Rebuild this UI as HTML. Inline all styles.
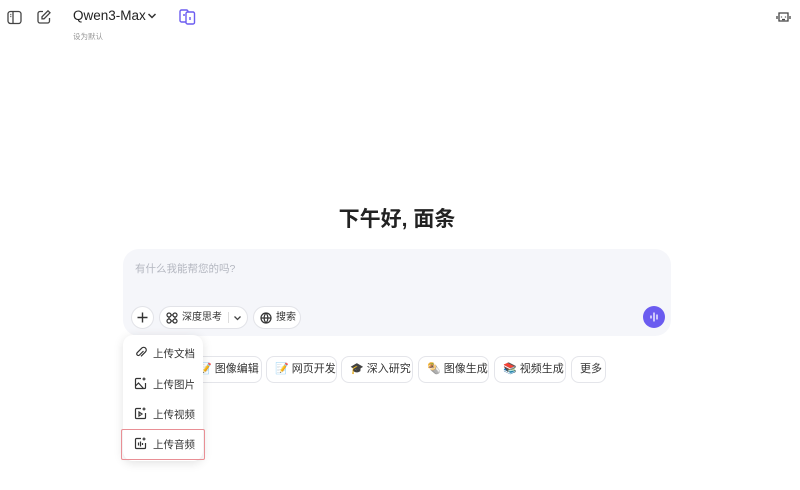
<!DOCTYPE html><html><head><meta charset="utf-8"><style>
*{box-sizing:border-box;margin:0;padding:0}
body{width:800px;height:490px;background:#fff;font-family:"Liberation Sans","Noto Sans CJK SC",sans-serif;position:relative;overflow:hidden;color:#222}
.a{position:absolute}
.chip{position:absolute;top:356px;height:27px;border:1px solid #e4e5ea;border-radius:8px;font-size:11px;line-height:25px;padding:0 8px;color:#333;background:#fff;white-space:nowrap}
.pill{position:absolute;top:306px;height:23px;border:1px solid #e2e3e8;border-radius:12px;background:#fff;font-size:10px;line-height:21px;color:#333}
.mi{position:absolute;left:134px;font-size:10.5px;color:#333}
.mi svg{position:absolute;left:0;top:0}
.mi span{position:absolute;left:19px;top:0;white-space:nowrap}
</style></head><body>
<svg class="a" style="left:7px;top:10px" width="15" height="15" viewBox="0 0 15 15" fill="none" stroke="#444" stroke-width="1.3"><rect x="1" y="1.5" width="13" height="12" rx="2.5"/><path d="M6 1.5v12M3.3 4.5h1M3.3 6.5h1"/></svg>
<svg class="a" style="left:36px;top:9px" width="16" height="16" viewBox="0 0 16 16" fill="none" stroke="#444" stroke-width="1.3"><path d="M7 2.5H4a2 2 0 0 0-2 2v7.5a2 2 0 0 0 2 2h7.5a2 2 0 0 0 2-2V9"/><path d="M12 1.8l2 2-6 6H6V7.8z"/></svg>
<div class="a" style="left:73px;top:8px;font-size:13.5px;color:#222">Qwen3-Max</div>
<svg class="a" style="left:147px;top:12px" width="10" height="8" viewBox="0 0 10 8" fill="none" stroke="#333" stroke-width="1.5"><path d="M1.5 2l3.5 3.5L8.5 2"/></svg>
<div class="a" style="left:73px;top:31px;font-size:7.5px;color:#999">设为默认</div>
<svg class="a" style="left:179px;top:9px" width="17" height="16" viewBox="0 0 17 16" fill="none" stroke="#6b5cf0" stroke-width="1.4"><rect x="1" y="1" width="8" height="12" rx="1.5"/><rect x="7" y="3" width="8.5" height="12" rx="1.5" fill="#fff"/><path d="M4 6h2M11 8v3"/></svg>
<svg class="a" style="left:776px;top:10px" width="15" height="14" viewBox="0 0 15 14" fill="none" stroke="#444" stroke-width="1.3"><path d="M3 3h9v8H3zM1 6v3M14 6v3M5.5 6.5v1M9.5 6.5v1M6 9.5h3"/></svg>
<div class="a" style="left:0;width:794px;top:203px;text-align:center;font-size:21px;font-weight:bold;color:#222">下午好, 面条</div>
<div class="a" style="left:123px;top:249px;width:548px;height:87px;background:#f5f6fa;border-radius:16px"></div>
<div class="a" style="left:135px;top:261px;font-size:10.5px;color:#b4b7c0">有什么我能帮您的吗?</div>
<div class="pill" style="left:131px;width:23px"><svg style="position:absolute;left:5px;top:5px" width="11" height="11" viewBox="0 0 11 11" stroke="#333" stroke-width="1.4"><path d="M5.5 0.5v10M0.5 5.5h10"/></svg></div>
<div class="pill" style="left:159px;width:89px"><svg style="position:absolute;left:6px;top:5px" width="12" height="12" viewBox="0 0 12 12" fill="none" stroke="#333" stroke-width="1.2"><circle cx="3" cy="3" r="2"/><circle cx="9" cy="3" r="2"/><circle cx="3" cy="9" r="2"/><circle cx="9" cy="9" r="2"/><path d="M5 3h2M5 9h2M3 5v2M9 5v2"/></svg><span style="position:absolute;left:22px">深度思考</span><span style="position:absolute;left:68px;top:5px;width:1px;height:11px;background:#ddd"></span><svg style="position:absolute;left:73px;top:8px" width="9" height="6" viewBox="0 0 9 6" fill="none" stroke="#444" stroke-width="1.3"><path d="M1.5 1.5l3 3 3-3"/></svg></div>
<div class="pill" style="left:253px;width:48px"><svg style="position:absolute;left:6px;top:5px" width="12" height="12" viewBox="0 0 12 12" fill="none" stroke="#333" stroke-width="1.2"><circle cx="6" cy="6" r="5"/><path d="M1 6h10M6 1c-2.5 3-2.5 7 0 10M6 1c2.5 3 2.5 7 0 10"/></svg><span style="position:absolute;left:22px">搜索</span></div>
<div class="a" style="left:643px;top:306px;width:22px;height:22px;border-radius:50%;background:#6b5cf0"><svg style="position:absolute;left:5px;top:5px" width="12" height="12" viewBox="0 0 12 12" stroke="#fff" stroke-width="1.3" stroke-linecap="round"><path d="M3 5v2M6 2v8M9 4v4"/></svg></div>
<div class="chip" style="left:185px;width:77px;padding-left:12px">📝 图像编辑</div>
<div class="chip" style="left:266px;width:71px">📝 网页开发</div>
<div class="chip" style="left:341px;width:72px">🎓 深入研究</div>
<div class="chip" style="left:418px;width:71px">🌯 图像生成</div>
<div class="chip" style="left:494px;width:72px">📚 视频生成</div>
<div class="chip" style="left:571px;width:35px">更多</div>
<div class="a" style="left:123px;top:335px;width:80px;height:126px;background:#fff;border-radius:10px;box-shadow:0 2px 10px rgba(0,0,0,.12)"></div>
<div class="a" style="left:121px;top:429px;width:84px;height:31px;border:1.5px solid #e98f95;border-radius:2px"></div>
<div class="mi" style="top:346px"><svg width="13" height="13" viewBox="0 0 13 13" fill="none" stroke="#333" stroke-width="1.2"><path d="M9.5 5l-4 4a1.6 1.6 0 0 1-2.3-2.3l4.6-4.6a2.6 2.6 0 0 1 3.7 3.7L7 10.3"/></svg><span>上传文档</span></div>
<div class="mi" style="top:377px"><svg width="13" height="13" viewBox="0 0 13 13" fill="none" stroke="#333" stroke-width="1.2"><path d="M7 1.5H2.5a1 1 0 0 0-1 1v8a1 1 0 0 0 1 1h8a1 1 0 0 0 1-1V6M1.5 9l3-3 5 5.5M10 0.5v3M8.5 2h3"/></svg><span>上传图片</span></div>
<div class="mi" style="top:407px"><svg width="13" height="13" viewBox="0 0 13 13" fill="none" stroke="#333" stroke-width="1.2"><path d="M7 1.5H2.5a1 1 0 0 0-1 1v8a1 1 0 0 0 1 1h8a1 1 0 0 0 1-1V6M5 5v4l3-2zM10 0.5v3M8.5 2h3"/></svg><span>上传视频</span></div>
<div class="mi" style="top:437px"><svg width="13" height="13" viewBox="0 0 13 13" fill="none" stroke="#333" stroke-width="1.2"><path d="M7 1.5H2.5a1 1 0 0 0-1 1v8a1 1 0 0 0 1 1h8a1 1 0 0 0 1-1V6M4.5 5.5v3M6.5 4.5v5M8.5 6v2M10 0.5v3M8.5 2h3"/></svg><span>上传音频</span></div>
</body></html>
